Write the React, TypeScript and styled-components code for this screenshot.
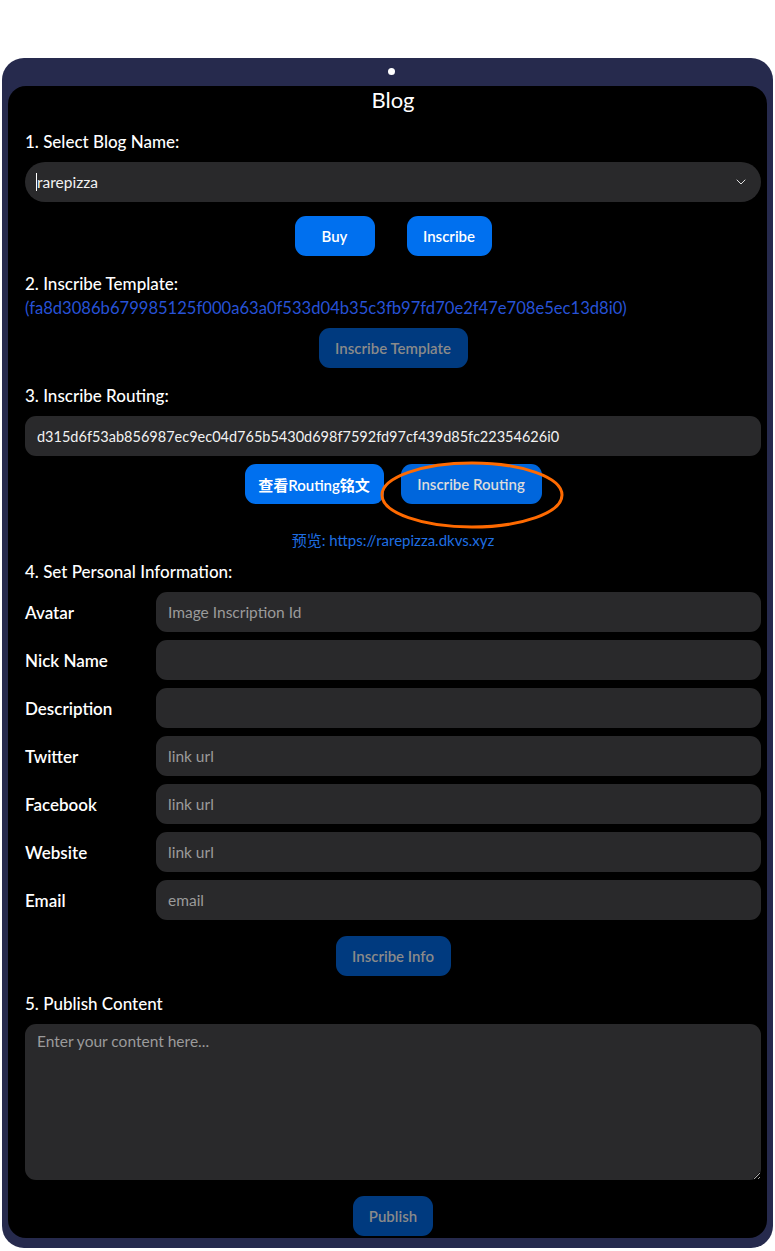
import React from 'react';
import styled, { createGlobalStyle } from 'styled-components';
import { ChevronDown } from 'lucide-react';

const GlobalStyle = createGlobalStyle`
  body {
    margin: 0;
    background: #ffffff;
    font-family: Lato, "Noto Sans CJK SC", sans-serif;
  }
`;

const Frame = styled.div`
  margin: 58px 2px 0 2px;
  width: 771px;
  box-sizing: border-box;
  padding: 28px 6px 10px 6px;
  background: #262a4d;
  border-radius: 22px;
  position: relative;
`;

const Camera = styled.div`
  position: absolute;
  top: 10px;
  left: 386px;
  width: 7px;
  height: 7px;
  border-radius: 50%;
  background: #ffffff;
`;

const Screen = styled.div`
  background: #000;
  border-radius: 18px;
  padding: 0 6px 2px 17px;
  color: #fff;
  overflow: hidden;
`;

const Title = styled.div`
  text-align: center;
  font-size: 22px;
  line-height: 28px;
`;

const Label = styled.div<{ $top?: number }>`
  margin-top: ${(p) => p.$top ?? 16}px;
  font-size: 17px;
  line-height: 24px;
  font-weight: 500;
`;

const SelectBox = styled.div`
  margin-top: 8px;
  height: 40px;
  border-radius: 20px;
  background: #29292b;
  display: flex;
  align-items: center;
  padding: 0 12px 0 11px;
  font-size: 15.5px;
  color: #f2f2f2;
`;

const Caret = styled.span`
  display: inline-block;
  width: 1px;
  height: 18px;
  background: #fff;
`;

const SelectValue = styled.span`
  flex: 1;
`;

const ButtonRow = styled.div<{ $gap: number; $top: number }>`
  margin-top: ${(p) => p.$top}px;
  display: flex;
  justify-content: center;
  gap: ${(p) => p.$gap}px;
`;

const Button = styled.button<{ $variant?: 'primary' | 'strong' | 'disabled'; $w: number }>`
  width: ${(p) => p.$w}px;
  height: 40px;
  border: none;
  border-radius: 11px;
  font-family: inherit;
  font-size: 15px;
  font-weight: 600;
  padding: 0;
  cursor: pointer;
  background: ${(p) =>
    p.$variant === 'disabled' ? '#003a7f' : p.$variant === 'strong' ? '#0066dc' : '#0070ef'};
  color: ${(p) =>
    p.$variant === 'disabled' ? '#8a8a8a' : p.$variant === 'strong' ? '#dcdcdc' : '#ffffff'};
`;

const HashLink = styled.div`
  font-size: 16.6px;
  line-height: 24px;
  color: #2752d6;
`;

const TextInput = styled.input`
  display: block;
  width: 100%;
  box-sizing: border-box;
  height: 40px;
  border: none;
  outline: none;
  border-radius: 11px;
  background: #29292b;
  color: #f2f2f2;
  font-family: inherit;
  font-size: 15.5px;
  padding: 0 12px;
  &::placeholder {
    color: #9b9b9b;
  }
`;

const RoutingInput = styled(TextInput)`
  margin-top: 8px;
  font-size: 14.5px;
`;

const Highlight = styled.div`
  position: relative;
  display: flex;
`;

const Ring = styled.svg`
  position: absolute;
  left: -20px;
  top: -2px;
  pointer-events: none;
  overflow: visible;
`;

const Preview = styled.div`
  margin-top: 26px;
  text-align: center;
  font-size: 15px;
  line-height: 20px;
  color: #1f6fe3;
`;

const Rows = styled.div`
  margin-top: 8px;
  display: flex;
  flex-direction: column;
  gap: 8px;
`;

const Row = styled.div`
  display: grid;
  grid-template-columns: 131px 1fr;
  align-items: center;
`;

const RowLabel = styled.div`
  font-size: 17px;
  font-weight: 600;
`;

const ContentArea = styled.textarea`
  display: block;
  margin-top: 8px;
  width: 100%;
  height: 156px;
  box-sizing: border-box;
  border: none;
  outline: none;
  border-radius: 11px;
  background: #29292b;
  color: #f2f2f2;
  font-family: inherit;
  font-size: 15.5px;
  padding: 8px 12px;
  &::placeholder {
    color: #9b9b9b;
  }
`;

const fields = [
  { label: 'Avatar', placeholder: 'Image Inscription Id' },
  { label: 'Nick Name', placeholder: '' },
  { label: 'Description', placeholder: '' },
  { label: 'Twitter', placeholder: 'link url' },
  { label: 'Facebook', placeholder: 'link url' },
  { label: 'Website', placeholder: 'link url' },
  { label: 'Email', placeholder: 'email' },
];

export default function App() {
  return (
    <>
      <GlobalStyle />
      <Frame>
        <Camera />
        <Screen>
          <Title>Blog</Title>

          <Label>1. Select Blog Name:</Label>
          <SelectBox>
            <Caret />
            <SelectValue>rarepizza</SelectValue>
            <ChevronDown size={16} strokeWidth={1.5} color="#e0e0e0" />
          </SelectBox>
          <ButtonRow $gap={32} $top={14}>
            <Button $w={80}>Buy</Button>
            <Button $w={85}>Inscribe</Button>
          </ButtonRow>

          <Label>2. Inscribe Template:</Label>
          <HashLink>(fa8d3086b679985125f000a63a0f533d04b35c3fb97fd70e2f47e708e5ec13d8i0)</HashLink>
          <ButtonRow $gap={0} $top={8}>
            <Button $w={149} $variant="disabled">Inscribe Template</Button>
          </ButtonRow>

          <Label>3. Inscribe Routing:</Label>
          <RoutingInput defaultValue="d315d6f53ab856987ec9ec04d765b5430d698f7592fd97cf439d85fc22354626i0" />
          <ButtonRow $gap={17} $top={8}>
            <Button $w={139}>查看Routing铭文</Button>
            <Highlight>
              <Button $w={141} $variant="strong">Inscribe Routing</Button>
              <Ring width="182" height="66" viewBox="0 0 182 66">
                <ellipse cx="91" cy="33" rx="90" ry="32" fill="none" stroke="#ff6a00" strokeWidth="3" />
              </Ring>
            </Highlight>
          </ButtonRow>
          <Preview>预览: https://rarepizza.dkvs.xyz</Preview>

          <Label $top={10}>4. Set Personal Information:</Label>
          <Rows>
            {fields.map((f) => (
              <Row key={f.label}>
                <RowLabel>{f.label}</RowLabel>
                <TextInput placeholder={f.placeholder} />
              </Row>
            ))}
          </Rows>
          <ButtonRow $gap={0} $top={16}>
            <Button $w={115} $variant="disabled">Inscribe Info</Button>
          </ButtonRow>

          <Label>5. Publish Content</Label>
          <ContentArea placeholder="Enter your content here..." />
          <ButtonRow $gap={0} $top={16}>
            <Button $w={80} $variant="disabled">Publish</Button>
          </ButtonRow>
        </Screen>
      </Frame>
    </>
  );
}
